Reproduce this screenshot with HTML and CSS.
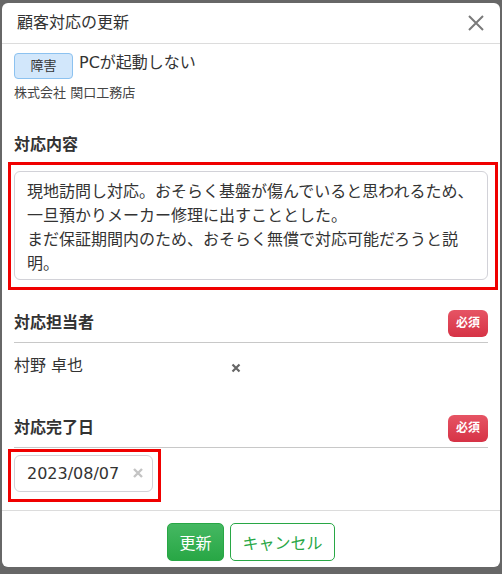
FILE: index.html
```html
<!DOCTYPE html>
<html lang="ja">
<head>
    <meta charset="UTF-8">
    <meta name="viewport" content="width=device-width, initial-scale=1.0">
    <title>顧客対応の更新</title>
    <link rel="stylesheet" href="styles.css">
</head>
<body>
    <div class="modal">
        <div class="modal-header">
            <h2 class="modal-title">顧客対応の更新</h2>
            <button class="close-button" aria-label="閉じる">
                <svg width="16" height="16" viewBox="0 0 16 16">
                    <path d="M1 1 L15 15 M15 1 L1 15" stroke="#7a7a7a" stroke-width="2" fill="none"/>
                </svg>
            </button>
        </div>

        <div class="modal-body">
            <div class="ticket-row">
                <span class="category-badge">障害</span>
                <span class="ticket-title">PCが起動しない</span>
            </div>
            <p class="company">株式会社 関口工務店</p>

            <!-- 対応内容 -->
            <div class="field-label">対応内容</div>
            <div class="highlight highlight-wide">
                <textarea class="content-area" readonly>現地訪問し対応。おそらく基盤が傷んでいると思われるため、
一旦預かりメーカー修理に出すこととした。
まだ保証期間内のため、おそらく無償で対応可能だろうと説明。</textarea>
            </div>

            <!-- 対応担当者 -->
            <div class="section-head">
                <span class="section-title">対応担当者</span>
                <span class="required-badge">必須</span>
            </div>
            <div class="person-select">
                <span>村野 卓也</span>
                <svg class="clear-icon" width="10" height="10" viewBox="0 0 10 10">
                    <path d="M1.5 1.5 L8.5 8.5 M8.5 1.5 L1.5 8.5" stroke="#666" stroke-width="2.2" fill="none"/>
                </svg>
            </div>

            <!-- 対応完了日 -->
            <div class="section-head section-date">
                <span class="section-title">対応完了日</span>
                <span class="required-badge">必須</span>
            </div>
            <div class="highlight highlight-small">
                <div class="date-input">
                    <span>2023/08/07</span>
                    <svg class="clear-icon" width="12" height="12" viewBox="0 0 12 12">
                        <path d="M2 2 L10 10 M10 2 L2 10" stroke="#c4c4c4" stroke-width="2.4" fill="none"/>
                    </svg>
                </div>
            </div>
        </div>

        <div class="modal-footer">
            <button class="btn btn-update">更新</button>
            <button class="btn btn-cancel">キャンセル</button>
        </div>
    </div>
</body>
</html>
```

FILE: styles.css
```css
body {
    margin: 0;
    padding: 0;
    background-color: #676767;
    font-family: "DejaVu Sans", "Noto Sans CJK JP", sans-serif;
    color: #333;
}

.modal {
    width: 498px;
    margin: 3px 2px 0 2px;
    background-color: #fff;
    border-radius: 6px;
}

.modal-header {
    display: flex;
    justify-content: space-between;
    align-items: center;
    height: 40px;
    padding: 0 16px 0 15px;
    border-bottom: 1px solid #dcdcdc;
}

.modal-title {
    margin: 0;
    font-size: 16px;
    font-weight: normal;
    line-height: 20px;
    color: #333;
}

.close-button {
    background: none;
    border: none;
    padding: 0;
    width: 16px;
    height: 16px;
    display: flex;
    cursor: pointer;
}

.modal-body {
    padding: 9px 12px 8px 12px;
}

.ticket-row {
    display: flex;
    align-items: flex-start;
}

.category-badge {
    box-sizing: border-box;
    width: 59px;
    height: 26px;
    line-height: 24px;
    text-align: center;
    font-size: 13px;
    background-color: #d2e7fb;
    border: 1px solid #8cc2f0;
    border-radius: 4px;
    color: #333;
}

.ticket-title {
    margin-left: 6px;
    font-size: 16px;
    line-height: 20px;
}

.company {
    margin: 4px 0 0 0;
    font-size: 13px;
    line-height: 19px;
    color: #444;
}

.field-label {
    margin-top: 31px;
    font-size: 16px;
    font-weight: bold;
    line-height: 24px;
}

/* 注目箇所の赤枠 */
.highlight {
    border: 3px solid #f00000;
}

.highlight-wide {
    margin: 5px -10px 0 -6px;
    padding: 6px 7px 7px 3px;
}

.highlight-small {
    width: fit-content;
    margin: 1px 0 0 -6px;
    padding: 3px 5px 7px 3px;
}

.content-area {
    display: block;
    box-sizing: border-box;
    width: 474px;
    height: 109px;
    margin: 0;
    padding: 6px 11px 5px 12px;
    border: 1px solid #d2d2d8;
    border-radius: 6px;
    font-family: "Noto Sans CJK JP", sans-serif;
    font-size: 16px;
    line-height: 24px;
    color: #333;
    resize: none;
    overflow: hidden;
    outline: none;
}

.section-head {
    display: flex;
    justify-content: space-between;
    align-items: flex-start;
    margin-top: 20px;
    padding-bottom: 5px;
    border-bottom: 1px solid #c8c8c8;
}

.section-date {
    margin-top: 37px;
}

.section-title {
    font-size: 16px;
    font-weight: bold;
    line-height: 25px;
}

.required-badge {
    width: 40px;
    height: 27px;
    line-height: 27px;
    text-align: center;
    font-size: 12px;
    font-weight: bold;
    color: #fff;
    background: linear-gradient(#e65464, #d63346);
    border-radius: 6px;
}

.person-select {
    display: flex;
    justify-content: space-between;
    align-items: center;
    width: 227px;
    margin-top: 11px;
    font-size: 16px;
    line-height: 24px;
    color: #333;
}

.clear-icon {
    margin-top: 3px;
}

.date-input {
    box-sizing: border-box;
    display: flex;
    justify-content: space-between;
    align-items: center;
    width: 139px;
    height: 37px;
    padding: 0 8px 0 12px;
    border: 1px solid #d2d2d8;
    border-radius: 6px;
    font-size: 16px;
    color: #333;
}

.date-input .clear-icon {
    margin-top: -2px;
}

.modal-footer {
    display: flex;
    justify-content: center;
    gap: 6px;
    padding: 12px 0 6px 0;
    border-top: 1px solid #dcdcdc;
}

.btn {
    box-sizing: border-box;
    height: 38px;
    padding: 0;
    white-space: nowrap;
    font-family: "DejaVu Sans", "Noto Sans CJK JP", sans-serif;
    font-size: 16px;
    border-radius: 5px;
    cursor: pointer;
}

.btn-update {
    width: 57px;
    color: #fff;
    background: linear-gradient(#45b862, #28a745);
    border: 1px solid #28a745;
}

.btn-cancel {
    width: 105px;
    color: #28a745;
    background-color: #fff;
    border: 1px solid #28a745;
}
```
